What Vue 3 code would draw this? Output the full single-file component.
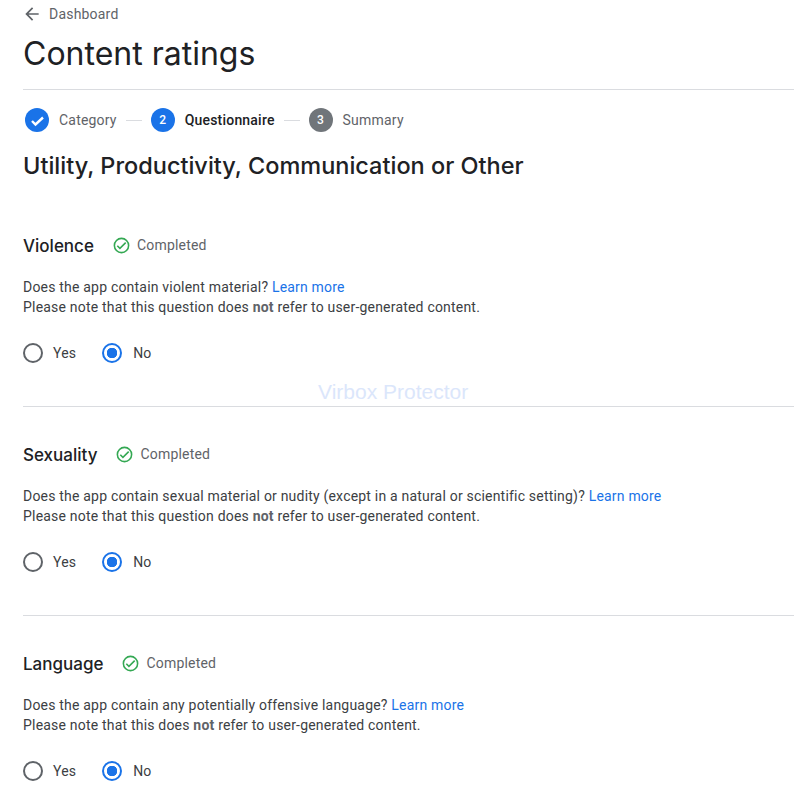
<template>
  <div class="page">
    <a class="back">
      <svg class="back-icon" width="20" height="20" viewBox="0 0 24 24">
        <path d="M20 11H7.83l5.59-5.59L12 4l-8 8 8 8 1.41-1.41L7.83 13H20v-2z" />
      </svg>
      <span>Dashboard</span>
    </a>
    <h1 class="title">Content ratings</h1>

    <div class="stepper">
      <template v-for="(step, i) in steps" :key="step.label">
        <div v-if="i > 0" class="step-line"></div>
        <div :class="['step', step.state]">
          <span class="step-badge">
            <svg v-if="step.state === 'done'" width="24" height="24" viewBox="0 0 24 24">
              <path d="M7 13l3.5 3.5L18 9.5" fill="none" stroke="#fff" stroke-width="2.4" />
            </svg>
            <template v-else>{{ i + 1 }}</template>
          </span>
          <span class="step-label">{{ step.label }}</span>
        </div>
      </template>
    </div>

    <h2 class="category">Utility, Productivity, Communication or Other</h2>

    <section v-for="q in questions" :key="q.name" class="question">
      <div class="question-head">
        <h3>{{ q.name }}</h3>
        <svg class="ok-icon" width="19" height="19" viewBox="0 0 24 24">
          <path
            d="M12 2a10 10 0 1 0 0 20 10 10 0 0 0 0-20zm0 18a8 8 0 1 1 0-16 8 8 0 0 1 0 16zm4.59-12.42L10 14.17l-2.59-2.58L6 13l4 4 8-8z"
          />
        </svg>
        <span class="status">Completed</span>
      </div>
      <p class="text">
        {{ q.text }} <a class="link">Learn more</a><br />
        Please note that this {{ q.subject }} <b>not</b> refer to user-generated content.
      </p>
      <div class="radios">
        <label class="radio"><span class="dot"></span>Yes</label>
        <label class="radio on"><span class="dot"></span>No</label>
      </div>
    </section>

    <div class="watermark">Virbox Protector</div>
  </div>
</template>

<script setup>
const steps = [
  { label: "Category", state: "done" },
  { label: "Questionnaire", state: "active" },
  { label: "Summary", state: "todo" },
];

const questions = [
  {
    name: "Violence",
    text: "Does the app contain violent material?",
    subject: "question does",
  },
  {
    name: "Sexuality",
    text: "Does the app contain sexual material or nudity (except in a natural or scientific setting)?",
    subject: "question does",
  },
  {
    name: "Language",
    text: "Does the app contain any potentially offensive language?",
    subject: "does",
  },
];
</script>

<style>
html,
body {
  overflow: hidden;
  background: #fff;
}
</style>

<style scoped>
.page {
  position: relative;
  height: 792px;
  overflow: hidden;
  padding-left: 23px;
  box-sizing: border-box;
  font-family: Roboto, "Liberation Sans", sans-serif;
  font-size: 14px;
  letter-spacing: 0.2px;
  color: #3c4043;
}

.back {
  display: flex;
  align-items: center;
  gap: 7px;
  height: 18px;
  padding: 5px 0 0 0;
  color: #5f6368;
}

.back-icon {
  fill: #5f6368;
  margin-left: -1px;
}

.title {
  margin: 11px 0 0;
  height: 55px;
  line-height: 40px;
  font-family: Inter, "Open Sans", sans-serif;
  font-size: 32px;
  font-weight: 400;
  letter-spacing: 0;
  color: #202124;
  border-bottom: 1px solid #dadce0;
}

.stepper {
  display: flex;
  align-items: center;
  height: 24px;
  margin: 18px 0 0 2px;
}

.step {
  display: flex;
  align-items: center;
  gap: 10px;
  color: #5f6368;
}

.step.active {
  font-weight: 500;
  color: #202124;
}

.step-badge {
  display: flex;
  align-items: center;
  justify-content: center;
  width: 24px;
  height: 24px;
  border-radius: 50%;
  background: #1a73e8;
  color: #fff;
  font-size: 12px;
  font-weight: 500;
}

.step.todo .step-badge {
  background: #70757a;
}

.step-line {
  width: 16px;
  height: 1px;
  margin: 0 9px;
  background: #dadce0;
}

.category {
  margin: 18px 0 0;
  line-height: 32px;
  font-family: Inter, "Open Sans", sans-serif;
  font-size: 23.5px;
  font-weight: 500;
  letter-spacing: 0;
  color: #202124;
}

.question {
  height: 209px;
  box-sizing: border-box;
  padding-top: 33px;
  border-bottom: 1px solid #dadce0;
}

.question:first-of-type {
  height: 225px;
  padding-top: 49px;
}

.question:last-of-type {
  border-bottom: 0;
}

.question-head {
  display: flex;
  align-items: center;
  height: 28px;
}

.question-head h3 {
  margin: 1px 18px 0 0;
  font-family: Inter, "Open Sans", sans-serif;
  font-size: 17px;
  font-weight: 500;
  letter-spacing: 0;
  color: #202124;
}

.ok-icon {
  fill: #34a853;
  margin-right: 6px;
}

.status {
  color: #5f6368;
}

.text {
  margin: 18px 0 0;
  line-height: 20px;
}

.link {
  color: #1a73e8;
}

.text b {
  font-weight: 700;
  color: #5f6368;
}

.radios {
  display: flex;
  gap: 26px;
  margin-top: 26px;
}

.radio {
  display: flex;
  align-items: center;
  gap: 10px;
  height: 20px;
}

.radio.on {
  gap: 11px;
  letter-spacing: 0;
}

.dot {
  width: 20px;
  height: 20px;
  box-sizing: border-box;
  border: 2px solid #5f6368;
  border-radius: 50%;
}

.radio.on .dot {
  border-color: #1a73e8;
  background: radial-gradient(circle, #1a73e8 0 5px, transparent 5.5px);
}

.watermark {
  position: absolute;
  top: 380px;
  left: 318px;
  font-family: "Liberation Sans", Arial, sans-serif;
  font-size: 21px;
  letter-spacing: 0;
  color: #dbe6fb;
  pointer-events: none;
}
</style>
